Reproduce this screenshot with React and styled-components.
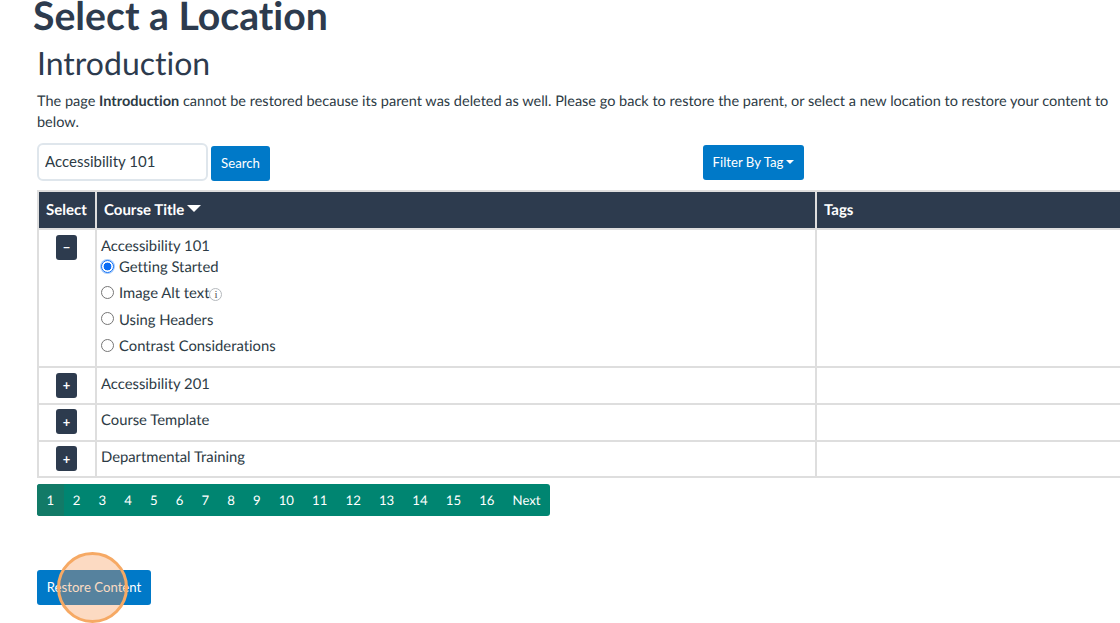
import React from 'react';
import styled, { createGlobalStyle } from 'styled-components';

const GlobalStyle = createGlobalStyle`
  html, body {
    margin: 0;
    height: 100%;
    overflow: hidden;
    background: #fff;
  }
  body {
    font-family: Lato, "Open Sans", sans-serif;
    color: #2d3b45;
    text-rendering: geometricPrecision;
    font-variant-ligatures: none;
  }
`;

const lessons = [
  { name: 'Getting Started', checked: true },
  { name: 'Image Alt text', info: true },
  { name: 'Using Headers' },
  { name: 'Contrast Considerations' },
];

const otherCourses = ['Accessibility 201', 'Course Template', 'Departmental Training'];
const pages = ['1', '2', '3', '4', '5', '6', '7', '8', '9', '10', '11', '12', '13', '14', '15', '16', 'Next'];

export default function App() {
  return (
    <Page>
      <GlobalStyle />
      <Title>Select a Location</Title>
      <Content>
        <SubTitle>Introduction</SubTitle>
        <Message>
          The page <strong>Introduction</strong> cannot be restored because its parent was deleted as well. Please go
          back to restore the parent, or select a new location to restore your content to below.
        </Message>
        <Toolbar>
          <SearchInput defaultValue="Accessibility 101" />
          <SearchButton>Search</SearchButton>
          <FilterButton>
            Filter By Tag
            <Caret />
          </FilterButton>
        </Toolbar>
        <Table>
          <colgroup>
            <col width="58" />
            <col width="720" />
            <col />
          </colgroup>
          <thead>
            <tr>
              <HeadCell>Select</HeadCell>
              <HeadCell>
                Course Title
                <SortArrow />
              </HeadCell>
              <HeadCell>Tags</HeadCell>
            </tr>
          </thead>
          <tbody>
            <tr>
              <SelectCell>
                <ToggleButton>−</ToggleButton>
              </SelectCell>
              <TitleCell>
                <CourseName>Accessibility 101</CourseName>
                <LessonList>
                  {lessons.map((lesson) => (
                    <LessonRow key={lesson.name}>
                      <Radio type="radio" name="lesson" defaultChecked={lesson.checked} />
                      {lesson.name}
                      {lesson.info && <InfoIcon>i</InfoIcon>}
                    </LessonRow>
                  ))}
                </LessonList>
              </TitleCell>
              <BodyCell />
            </tr>
            {otherCourses.map((course) => (
              <tr key={course}>
                <SelectCell>
                  <ToggleButton>+</ToggleButton>
                </SelectCell>
                <TitleCell>
                  <CourseName>{course}</CourseName>
                </TitleCell>
                <BodyCell />
              </tr>
            ))}
          </tbody>
        </Table>
        <Pagination>
          {pages.map((page, i) => (
            <PageLink key={page} $active={i === 0}>
              {page}
            </PageLink>
          ))}
        </Pagination>
        <RestoreWrap>
          <RestoreButton>Restore Content</RestoreButton>
          <ClickMarker />
        </RestoreWrap>
      </Content>
    </Page>
  );
}

const Page = styled.div`
  width: 1120px;
  height: 623px;
  overflow: hidden;
`;

const Title = styled.h1`
  margin: -7px 0 0 33px;
  font-size: 39.2px;
  line-height: 46px;
  font-weight: 700;
  color: #2d3b4e;
`;

const Content = styled.div`
  padding-left: 37px;
`;

const SubTitle = styled.h2`
  margin: 0;
  padding-top: 4px;
  font-size: 32px;
  line-height: 40px;
  font-weight: 400;
  color: #2d3b4e;
`;

const Message = styled.p`
  margin: 8px 0 0;
  width: 1078px;
  font-size: 14.5px;
  line-height: 21px;
`;

const Toolbar = styled.div`
  display: flex;
  align-items: flex-start;
  margin-top: 10px;
  height: 47px;
`;

const SearchInput = styled.input`
  box-sizing: border-box;
  width: 171px;
  height: 38px;
  padding: 0 6px 2px;
  border: 2px solid #dfe6ec;
  border-radius: 6px;
  outline: none;
  font-family: inherit;
  font-size: 15px;
  color: #2d3b45;
`;

const BlueButton = styled.button`
  box-sizing: border-box;
  height: 35px;
  padding: 0 0 2px;
  border: none;
  border-radius: 3px;
  background: #0079c8;
  color: #fff;
  font-family: inherit;
  font-size: 13.2px;
  white-space: nowrap;
`;

const SearchButton = styled(BlueButton)`
  width: 59px;
  margin: 3px 0 0 3px;
`;

const FilterButton = styled(BlueButton)`
  display: flex;
  align-items: center;
  justify-content: center;
  width: 101px;
  margin: 2px 0 0 433px;
`;

const Caret = styled.span`
  width: 0;
  height: 0;
  margin-left: 3px;
  border-left: 4px solid transparent;
  border-right: 4px solid transparent;
  border-top: 4px solid #fff;
`;

const Table = styled.table`
  width: 1100px;
  table-layout: fixed;
  border-collapse: collapse;
  border: 2px solid #dedede;
`;

const HeadCell = styled.th`
  height: 36px;
  padding: 0 7px;
  border: 2px solid #dedede;
  background: #2d3b4e;
  color: #fff;
  font-size: 15px;
  font-weight: 700;
  text-align: left;
  white-space: nowrap;
`;

const SortArrow = styled.span`
  display: inline-block;
  margin-left: 3px;
  vertical-align: 3px;
  border-left: 7.5px solid transparent;
  border-right: 7.5px solid transparent;
  border-top: 7.5px solid #fff;
`;

const BodyCell = styled.td`
  padding: 0;
  border: 2px solid #dedede;
  vertical-align: top;
`;

const SelectCell = styled(BodyCell)`
  padding: 4.5px 1px 0 0;
  text-align: center;
`;

const TitleCell = styled(BodyCell)`
  padding: 5.5px 5px 0 4px;
`;

const ToggleButton = styled.button`
  display: block;
  width: 21px;
  height: 25px;
  margin: 0 auto 5.2px;
  padding: 0;
  border: none;
  border-radius: 3px;
  background: #2d3b4e;
  color: #fff;
  font-family: inherit;
  font-size: 13px;
  font-weight: 700;
`;

const CourseName = styled.div`
  font-size: 14.8px;
  line-height: 21px;
`;

const LessonList = styled.div`
  display: flex;
  flex-direction: column;
  margin: -2.5px 0 7px;
`;

const LessonRow = styled.label`
  display: flex;
  align-items: center;
  height: 26.3px;
  font-size: 14.8px;
`;

const Radio = styled.input`
  appearance: none;
  box-sizing: border-box;
  width: 13px;
  height: 13px;
  margin: 0 5px 2px 0;
  border: 1px solid #767676;
  border-radius: 50%;
  background: #fff;
  &:checked {
    border-color: #0a6cf5;
    background: radial-gradient(circle, #0a6cf5 0 3.6px, #fff 4.2px);
    box-shadow: 0 0 0 1px #a8cdfb;
  }
`;

const InfoIcon = styled.span`
  display: inline-flex;
  align-items: center;
  justify-content: center;
  box-sizing: border-box;
  width: 13px;
  height: 13px;
  margin-top: 3px;
  border: 1px solid #b5b9bd;
  border-radius: 50%;
  font-family: "Liberation Serif", serif;
  font-size: 11px;
  color: #555;
`;

const Pagination = styled.nav`
  display: inline-flex;
  height: 32px;
  margin-top: 6px;
  border-radius: 3px;
  overflow: hidden;
  background: #008571;
`;

const PageLink = styled.a`
  display: flex;
  align-items: center;
  padding: 0 ${(p) => (p.$active ? '9.5px' : '9.05px')};
  background: ${(p) => (p.$active ? '#127a67' : 'transparent')};
  color: #fff;
  font-size: 13.2px;
`;

const RestoreWrap = styled.div`
  position: relative;
  width: 114px;
  margin-top: 54px;
`;

const RestoreButton = styled(BlueButton)`
  display: block;
  width: 114px;
`;

const ClickMarker = styled.span`
  position: absolute;
  left: 20px;
  top: -18px;
  box-sizing: border-box;
  width: 71px;
  height: 71px;
  border: 3px solid #f6a964;
  border-radius: 50%;
  background: rgba(247, 150, 80, 0.35);
`;
